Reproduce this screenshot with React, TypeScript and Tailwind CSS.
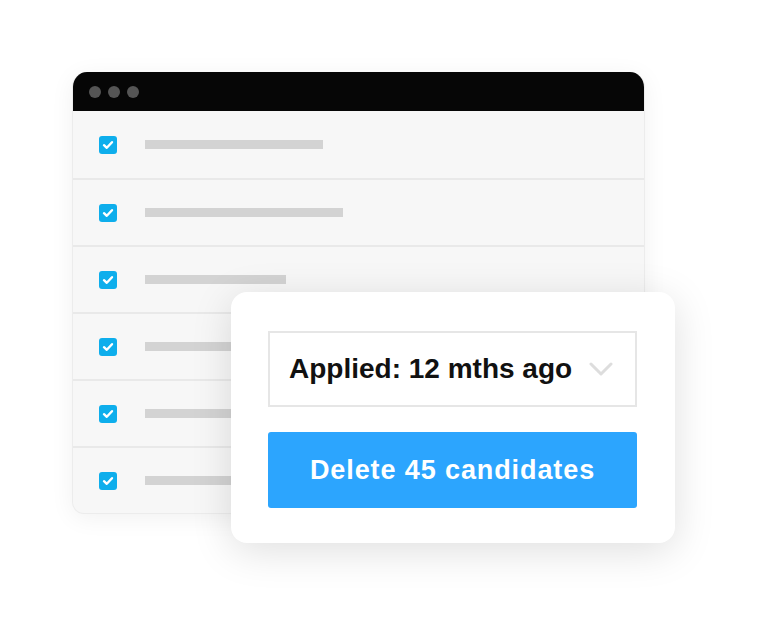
import React from "react";

const rows = [178, 198, 141, 160, 180, 150];

function Checkbox() {
  return (
    <div className="w-[18px] h-[18px] rounded-[3px] bg-[#0eaeec] flex items-center justify-center shrink-0">
      <svg width="12" height="10" viewBox="0 0 12 10" fill="none">
        <path d="M2 5.2 L4.8 7.8 L10 2.2" stroke="white" strokeWidth="2.4" strokeLinecap="round" strokeLinejoin="round" />
      </svg>
    </div>
  );
}

export default function App() {
  return (
    <div
      className="relative w-[772px] h-[639px] bg-white overflow-hidden pt-[72px] pl-[72px]"
      style={{ fontFamily: '"Liberation Sans", Arial, sans-serif' }}
    >
      {/* Browser window */}
      <div className="w-[573px] rounded-t-[15px] rounded-b-[12px] overflow-hidden bg-[#f7f7f7] border-x border-b border-[#ececec] shadow-[0_4px_24px_rgba(0,0,0,0.06)]">
        <div className="h-[39px] bg-[#060606] flex items-center gap-[7px] pl-[16px]">
          <span className="w-3 h-3 rounded-full bg-[#555]" />
          <span className="w-3 h-3 rounded-full bg-[#555]" />
          <span className="w-3 h-3 rounded-full bg-[#555]" />
        </div>
        {rows.map((w, i) => (
          <div
            key={i}
            className={
              i === 0
                ? "h-[67px] flex items-center pl-[26px] gap-[28px]"
                : "h-[67px] flex items-center pl-[26px] gap-[28px] border-t-2 border-[#e9e9e9]"
            }
          >
            <Checkbox />
            <div className="h-[9px] bg-[#d3d3d3]" style={{ width: w }} />
          </div>
        ))}
      </div>

      {/* Overlay card */}
      <div className="absolute left-[231px] top-[292px] w-[444px] h-[251px] bg-white rounded-[16px] shadow-[0_8px_40px_rgba(0,0,0,0.13)] pt-[39px] pl-[37px] pr-[38px] flex flex-col gap-[25px]">
        <div className="h-[76px] border-2 border-[#e6e6e6] flex items-center justify-between pl-[19px] pr-[22px]">
          <span className="text-[28px] font-bold text-[#111] leading-none">Applied: 12 mths ago</span>
          <svg width="24" height="15" viewBox="0 0 24 15" fill="none">
            <path d="M2 2 L12 12 L22 2" stroke="#dddddd" strokeWidth="3" strokeLinecap="round" strokeLinejoin="round" />
          </svg>
        </div>
        <button className="h-[76px] w-full rounded-[3px] bg-[#2ca5fe] text-white text-[27px] font-bold tracking-[0.9px] flex items-center justify-center">
          Delete 45 candidates
        </button>
      </div>
    </div>
  );
}
